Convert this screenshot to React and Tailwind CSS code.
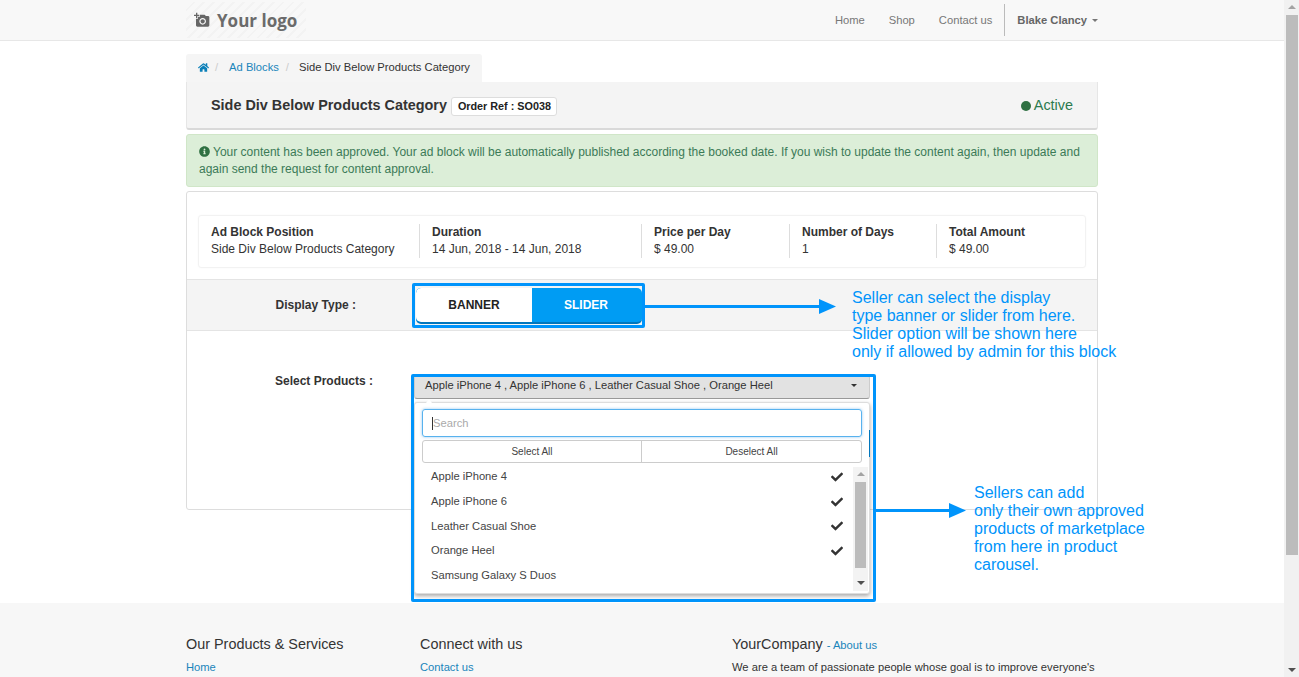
import React from "react";
import { FaHome, FaInfoCircle, FaCheck } from "react-icons/fa";
import { MdAddAPhoto } from "react-icons/md";

function Arrow({ className }) {
  return (
    <div className={"absolute flex items-center " + className}>
      <div className="h-[3px] flex-1 bg-[#0094fb]" />
      <svg width="17" height="15" viewBox="0 0 17 15" className="shrink-0 -ml-px">
        <path d="M0 0 L17 7.5 L0 15 Z" fill="#0094fb" />
      </svg>
    </div>
  );
}

function Info({ label, value, className }) {
  return (
    <div className={"flex flex-col justify-center h-[34px] leading-[17px] " + className}>
      <div className="font-bold text-[#333]">{label}</div>
      <div className="text-[#333]">{value}</div>
    </div>
  );
}

const items = [
  ["Apple iPhone 4", true, "h-[25px]"],
  ["Apple iPhone 6", true, "h-[25px]"],
  ["Leather Casual Shoe", true, "h-[24px]"],
  ["Orange Heel", true, "h-[25px]"],
  ["Samsung Galaxy S Duos", false, "h-[25px]"],
];

export default function App() {
  return (
    <div className="relative flex h-[677px] overflow-hidden bg-white text-[12px] text-[#333] font-['Liberation_Sans',Arial,sans-serif]">
      <div className="w-[1284px] shrink-0 flex flex-col h-[677px] overflow-hidden">
        {/* navbar */}
        <header className="h-[41px] shrink-0 bg-[#f8f8f8] border-b border-[#e7e7e7]">
          <div className="w-[912px] mx-auto h-[40px] flex items-center justify-between">
            <div className="flex items-center w-[120px] h-[36px] pl-[8px] bg-[repeating-linear-gradient(135deg,#f8f8f8_0,#f8f8f8_5px,#f3f3f3_5px,#f3f3f3_7px)]">
              <MdAddAPhoto className="text-[#666] w-[16px] h-[16px]" />
              <span className="ml-[7px] text-[17px] font-bold text-[#6b6b6b] font-['Open_Sans',sans-serif] leading-none">Your logo</span>
            </div>
            <nav className="flex items-center h-[32px] text-[#777] text-[11.2px]">
              <span className="mr-[24px]">Home</span>
              <span className="mr-[24px]">Shop</span>
              <span className="mr-[12px]">Contact us</span>
              <div className="h-[32px] w-px bg-[#bbb]" />
              <span className="ml-[12px] font-bold text-[#666]">Blake Clancy</span>
              <span className="ml-[5px] w-0 h-0 border-x-[3px] border-x-transparent border-t-[3px] border-t-[#777]" />
            </nav>
          </div>
        </header>

        <main className="relative w-[912px] mx-auto h-[562px] shrink-0 pt-[13px]">
          {/* breadcrumb */}
          <div className="w-[296px] h-[28px] pb-[2px] bg-[#f5f5f5] rounded-t-[3px] flex items-center pl-[12px] text-[11.2px]">
            <FaHome className="text-[#0a7fb8] w-[11px] h-[11px]" />
            <span className="ml-[6px] text-[#ccc]">/</span>
            <span className="ml-[11px] text-[#1a85bb]">Ad Blocks</span>
            <span className="ml-[7px] text-[#ccc]">/</span>
            <span className="ml-[10px] text-[#333]">Side Div Below Products Category</span>
          </div>
          {/* title */}
          <div className="h-[48px] pt-[2px] bg-[#f4f4f4] rounded-b-[3px] border-x border-[#e6e6e6] border-b-2 border-b-[#d9d9d9] flex items-center justify-between pl-[24px] pr-[24px]">
            <div className="flex items-center">
              <span className="text-[14.4px] font-bold text-[#333]">Side Div Below Products Category</span>
              <span className="ml-[4px] mt-[1px] h-[19px] pl-[6px] pr-[5px] flex items-center bg-white border border-[#ddd] rounded-[3px] text-[10.8px] font-bold text-[#222]">Order Ref : SO038</span>
            </div>
            <div className="flex items-center text-[#2c7a4f] text-[14.4px]">
              <span className="w-[10px] h-[10px] rounded-full bg-[#2f7042] mr-[3px] mt-px" />
              Active
            </div>
          </div>
          {/* alert */}
          <div className="mt-[4px] h-[53px] bg-[#dceed8] border border-[#d0e6c8] rounded-[3px] px-[12px] pt-[9px] leading-[17px] text-[#3b7a57]">
            <FaInfoCircle className="inline w-[11px] h-[11px] mr-[3px] align-[-1px] text-[#2f7042]" />
            Your content has been approved. Your ad block will be automatically published according the booked date. If you wish to update the content again, then update and again send the request for content approval.
          </div>
          {/* card */}
          <section className="mt-[4px] h-[319px] border border-[#ddd] rounded-[3px] bg-white">
            <div className="mt-[23px] mx-[11px] h-[53px] pb-[2px] border border-[#f2f2f2] rounded-[3px] flex items-center shadow-[0_0_2px_rgba(0,0,0,0.03)]">
              <Info label="Ad Block Position" value="Side Div Below Products Category" className="w-[221px] pl-[12px] border-r border-[#ddd]" />
              <Info label="Duration" value="14 Jun, 2018 - 14 Jun, 2018" className="w-[222px] pl-[12px] border-r border-[#ddd]" />
              <Info label="Price per Day" value="$ 49.00" className="w-[148px] pl-[12px] border-r border-[#ddd]" />
              <Info label="Number of Days" value="1" className="w-[147px] pl-[12px] border-r border-[#ddd]" />
              <Info label="Total Amount" value="$ 49.00" className="pl-[12px]" />
            </div>
            <div className="mt-[11px] h-[52px] bg-[#f4f4f4] border-y border-[#e4e4e4] flex items-center">
              <div className="w-[169px] text-right font-bold text-[#333]">Display Type :</div>
              <div className="ml-[60px] mt-[1px] w-[226px] h-[36px] flex rounded-[5px] border-b-[2px] border-[#0277bd] overflow-hidden bg-[#009cf3] font-bold">
                <div className="w-[116px] flex items-center justify-center bg-white text-[#222] rounded-l-[5px]">BANNER</div>
                <div className="flex-1 flex items-center justify-center pr-[2px] text-white">SLIDER</div>
              </div>
            </div>
            <div className="flex mt-[42px]">
              <div className="w-[186px] text-right font-bold text-[#333] leading-[14px] mt-px">Select Products :</div>
            </div>
          </section>

          {/* product dropdown, over the card */}
          <div className="absolute left-[228px] top-[335px] w-[456px]">
            <div className="relative h-[24px] bg-[#e2e2e2] border border-[#ccc] border-b-[#999] rounded-[3px] flex items-center justify-between pl-[10px] pr-[12px] text-[11.2px] text-[#333] -mt-[1px]">
              <span className="-mt-[3px]">Apple iPhone 4 , Apple iPhone 6 , Leather Casual Shoe , Orange Heel</span>
              <span className="-mt-[3px] w-0 h-0 border-x-[3px] border-x-transparent border-t-[3px] border-t-[#333]" />
            </div>
            <div className="relative mt-[3px] h-[192px] bg-white border border-[#ddd] rounded-[3px] shadow-[0_2px_4px_rgba(0,0,0,0.35)] px-[7px] pt-[6px]">
              <span className="absolute left-[11px] -top-[4px] w-0 h-0 border-x-[3px] border-x-transparent border-b-[4px] border-b-white" />
              <div className="h-[28px] border border-[#58b2ee] rounded-[3px] shadow-[0_0_3px_rgba(102,175,233,0.7)] flex items-center pl-[9px] text-[#aaa] text-[11.2px]">
                <span className="w-px h-[13px] bg-[#333]" />Search
              </div>
              <div className="mt-[3px] h-[23px] border border-[#ccc] rounded-[3px] flex text-[10px] text-[#444]">
                <div className="w-[219px] border-r border-[#ccc] flex items-center justify-center">Select All</div>
                <div className="flex-1 flex items-center justify-center">Deselect All</div>
              </div>
              <ul className="mt-[1px] text-[11.2px] text-[#444]">
                {items.map(([name, checked, h]) => (
                  <li key={name} className={"flex items-center justify-between pl-[9px] pr-[19px] " + h}>
                    <span>{name}</span>
                    {checked && <FaCheck className="w-[12px] h-[12px] text-[#333]" />}
                  </li>
                ))}
              </ul>
            </div>
            {/* inner scrollbar */}
            <div className="absolute left-[439px] top-[91px] w-[15px] h-[124px] bg-[#f3f3f3] flex flex-col items-center">
              <span className="mt-[5px] w-0 h-0 border-x-[4px] border-x-transparent border-b-[4px] border-b-[#a3a3a3]" />
              <span className="mt-[6px] w-[11px] h-[86px] bg-[#bcbcbc]" />
              <span className="mt-[13px] w-0 h-0 border-x-[4px] border-x-transparent border-t-[4px] border-t-[#505050]" />
            </div>
            <span className="absolute left-[455px] top-[54px] w-px h-[27px] bg-[#0277bd]" />
          </div>

          {/* annotation overlays */}
          <div className="absolute left-[226px] top-[242px] w-[233px] h-[45px] border-[3px] border-[#0094fb] rounded-[2px]" />
          <Arrow className="left-[459px] top-[258px] w-[191px] h-[15px]" />
          <div className="absolute left-[666px] top-[248px] text-[16px] leading-[18px] text-[#0094fb] whitespace-nowrap">
            Seller can select the display<br />type banner or slider from here.<br />Slider option will be shown here<br />only if allowed by admin for this block
          </div>

          <div className="absolute left-[225px] top-[333px] w-[465px] h-[228px] border-[3px] border-[#0094fb] rounded-[2px]" />
          <Arrow className="left-[689px] top-[462px] w-[91px] h-[15px]" />
          <div className="absolute left-[788px] top-[443px] text-[16px] leading-[18px] text-[#0094fb] whitespace-nowrap">
            Sellers can add<br />only their own approved<br />products of marketplace<br />from here in product<br />carousel.
          </div>
        </main>

        {/* footer */}
        <footer className="flex-1 bg-[#f7f7f7]">
          <div className="w-[912px] mx-auto pt-[32px] flex">
            <div className="w-[234px]">
              <div className="text-[14.4px] leading-[18px] text-[#333]">Our Products &amp; Services</div>
              <div className="mt-[6px] text-[11.2px] text-[#1a85bb]">Home</div>
            </div>
            <div className="w-[312px]">
              <div className="text-[14.4px] leading-[18px] text-[#333]">Connect with us</div>
              <div className="mt-[6px] text-[11.2px] text-[#1a85bb]">Contact us</div>
            </div>
            <div className="flex-1">
              <div className="text-[14.4px] leading-[18px] text-[#333]">YourCompany <span className="text-[11.2px] text-[#1a85bb]">- About us</span></div>
              <div className="mt-[5px] text-[11.2px] text-[#333] whitespace-nowrap">We are a team of passionate people whose goal is to improve everyone's</div>
            </div>
          </div>
        </footer>
      </div>

      {/* page scrollbar */}
      <aside className="w-[15px] shrink-0 h-[677px] bg-[#f1f1f1] flex flex-col items-center">
        <span className="mt-[5px] w-0 h-0 border-x-[4px] border-x-transparent border-b-[4px] border-b-[#a3a3a3]" />
        <span className="mt-[6px] w-[12px] h-[540px] bg-[#bcbcbc]" />
        <span className="mt-[113px] w-0 h-0 border-x-[4px] border-x-transparent border-t-[4px] border-t-[#505050]" />
      </aside>
    </div>
  );
}
